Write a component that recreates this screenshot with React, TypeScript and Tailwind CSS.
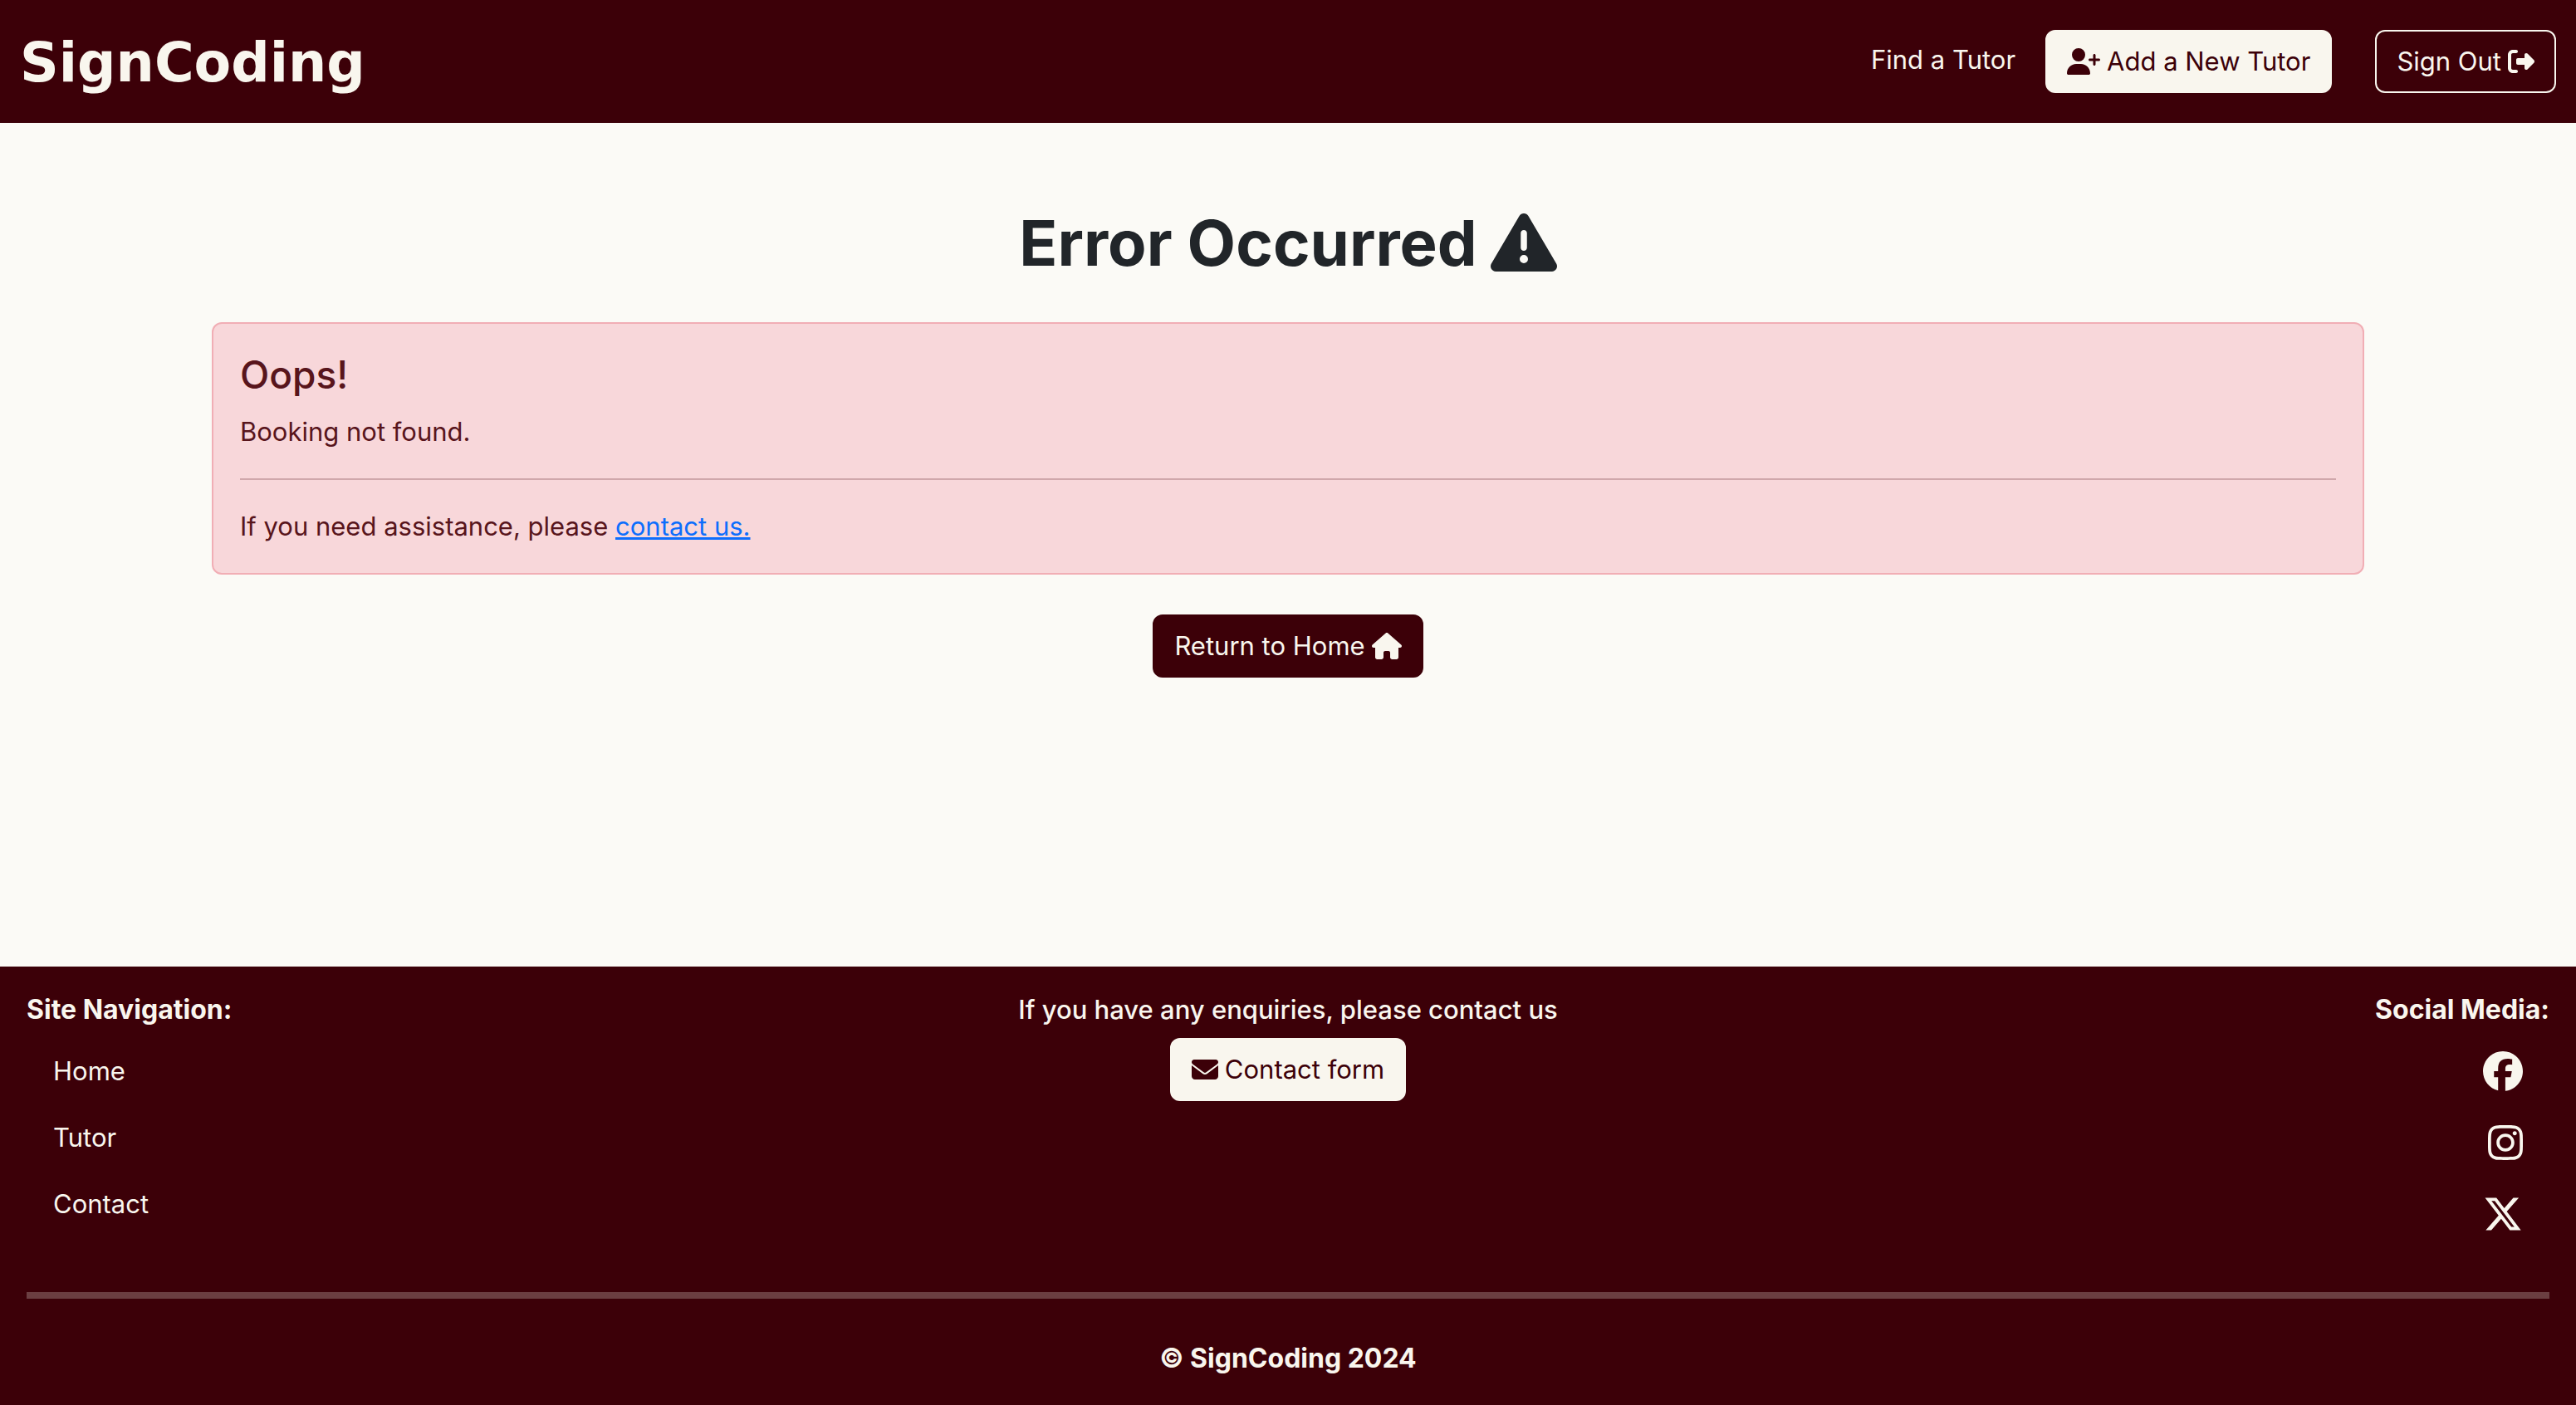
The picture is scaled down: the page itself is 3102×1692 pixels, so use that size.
import type { ReactNode } from "react";
import {
  FaEnvelope,
  FaFacebook,
  FaHouse,
  FaInstagram,
  FaRightFromBracket,
  FaTriangleExclamation,
  FaUserPlus,
  FaXTwitter,
} from "react-icons/fa6";

const buttonBase =
  "inline-flex items-center gap-2 whitespace-nowrap rounded-xl border-2 px-6 py-3";

const siteLinks = ["Home", "Tutor", "Contact"];

function SocialLink({ label, children }: { label: string; children: ReactNode }) {
  return (
    <li>
      <a href="#" aria-label={label} className="block">
        {children}
      </a>
    </li>
  );
}

function Header() {
  return (
    <header className="flex h-[148px] items-center justify-between bg-[#3c0008] px-6 text-[#f9f6ee]">
      <a href="#" className="pt-1 font-['DejaVu_Sans',sans-serif] text-[65px] leading-[88px] font-bold">
        SignCoding
      </a>
      <nav className="flex items-center">
        <a href="#" className="mr-5 px-4 pb-1">
          Find a Tutor
        </a>
        <a href="#" className={`${buttonBase} mr-[52px] border-[#f9f6ee] bg-[#f9f6ee] text-[#3c0008]`}>
          <FaUserPlus className="h-8 w-10" />
          Add a New Tutor
        </a>
        <button type="button" className={`${buttonBase} border-[#f9f6ee]`}>
          Sign Out
          <FaRightFromBracket className="size-8" />
        </button>
      </nav>
    </header>
  );
}

function ErrorPanel() {
  return (
    <main className="mx-auto flex w-full max-w-[2640px] flex-1 flex-col items-center px-6 pt-24">
      <h1 className="flex items-center gap-4 text-[76px] leading-24 font-bold text-[#212529]">
        Error Occurred
        <FaTriangleExclamation className="size-20" />
      </h1>
      <section
        role="alert"
        className="mt-12 w-full rounded-xl border-2 border-[#f1aeb5] bg-[#f8d7da] p-8 text-[#58151c]"
      >
        <h2 className="mb-4 text-[46px] leading-[58px] font-medium">Oops!</h2>
        <p>Booking not found.</p>
        <hr className="my-8 border-t-2 border-[#d0a7ab]" />
        <p>
          If you need assistance, please{" "}
          <a href="#" className="text-[#0d6efd] underline decoration-[3px]">
            contact us.
          </a>
        </p>
      </section>
      <a href="#" className={`${buttonBase} mt-12 border-[#3c0008] bg-[#3c0008] text-[#f9f6ee]`}>
        Return to Home
        <FaHouse className="h-8 w-9" />
      </a>
    </main>
  );
}

function Footer() {
  return (
    <footer className="bg-[#3c0008] px-8 pt-7 pb-8 text-[#f9f6ee]">
      <div className="grid h-[332px] grid-cols-3">
        <nav aria-labelledby="site-navigation">
          <h2 id="site-navigation" className="text-[32px] leading-12 font-bold">
            Site Navigation:
          </h2>
          <ul className="mt-[26px] flex flex-col gap-8 pl-8">
            {siteLinks.map((name) => (
              <li key={name}>
                <a href="#">{name}</a>
              </li>
            ))}
          </ul>
        </nav>
        <div className="flex flex-col items-center">
          <p className="font-medium">If you have any enquiries, please contact us</p>
          <a href="#" className={`${buttonBase} mt-2.5 border-[#f9f6ee] bg-[#f9f6ee] text-[#3c0008]`}>
            <FaEnvelope className="size-8" />
            Contact form
          </a>
        </div>
        <div className="text-right">
          <h2 className="text-[32px] leading-12 font-bold">Social Media:</h2>
          <ul className="mt-[26px] flex flex-col items-end gap-[38px] pr-8">
            <SocialLink label="Facebook">
              <FaFacebook className="size-12" />
            </SocialLink>
            <SocialLink label="Instagram">
              <FaInstagram className="h-12 w-[42px]" />
            </SocialLink>
            <SocialLink label="X">
              <FaXTwitter className="size-12" />
            </SocialLink>
          </ul>
        </div>
      </div>
      <hr className="mt-8 mb-12 border-t-8 border-[#6b3e41]" />
      <p className="text-center text-[32px] leading-12 font-bold">© SignCoding 2024</p>
    </footer>
  );
}

export default function App() {
  return (
    <div className="flex min-h-screen flex-col bg-[#fbfaf6] font-['Inter','Noto_Sans',sans-serif] text-[31px] leading-12">
      <Header />
      <ErrorPanel />
      <Footer />
    </div>
  );
}
